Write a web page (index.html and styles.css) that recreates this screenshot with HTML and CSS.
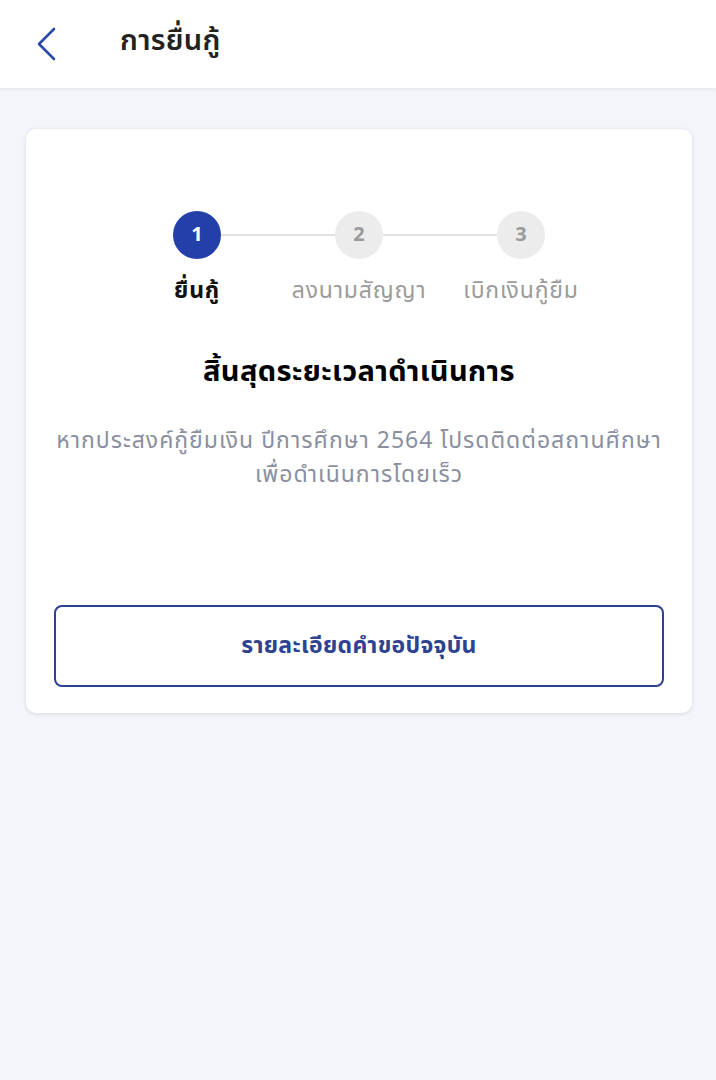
FILE: index.html
```html
<!DOCTYPE html>
<html lang="th">

<head>
  <meta charset="UTF-8" />
  <meta name="viewport" content="width=device-width, initial-scale=1.0" />
  <title>การยื่นกู้</title>
  <link rel="stylesheet" href="styles.css">
</head>

<body>
  <header class="topbar">
    <button class="back" aria-label="ย้อนกลับ">
      <svg width="22" height="34" viewBox="0 0 22 34">
        <polyline points="18,2 3,17 18,32" fill="none" stroke="#2b4aa3" stroke-width="2.6" stroke-linecap="round" stroke-linejoin="round" />
      </svg>
    </button>
    <h1 class="title">การยื่นกู้</h1>
  </header>

  <main class="content">
    <section class="card">
      <div class="stepper">
        <div class="dots">
          <span class="dot active">1</span>
          <span class="line"></span>
          <span class="dot">2</span>
          <span class="line"></span>
          <span class="dot">3</span>
        </div>
        <div class="labels">
          <span class="label active">ยื่นกู้</span>
          <span class="label">ลงนามสัญญา</span>
          <span class="label">เบิกเงินกู้ยืม</span>
        </div>
      </div>

      <h2 class="heading">สิ้นสุดระยะเวลาดำเนินการ</h2>
      <p class="desc">หากประสงค์กู้ยืมเงิน ปีการศึกษา 2564 โปรดติดต่อสถานศึกษา<br>เพื่อดำเนินการโดยเร็ว</p>

      <button class="btn-outline">รายละเอียดคำขอปัจจุบัน</button>
    </section>
  </main>
</body>

</html>
```

FILE: styles.css
```css
body {
  font-family: 'Noto Sans Thai', 'Noto Sans', 'DejaVu Sans', sans-serif;
  background-color: #f4f5fa;
  color: #1e1e1e;
  margin: 0;
  width: 716px;
  min-height: 1080px;
}

.topbar {
  height: 88px;
  background-color: #ffffff;
  display: flex;
  align-items: center;
  box-shadow: 0 1px 4px rgba(0, 0, 0, 0.08);
}

.back {
  background: none;
  border: 0;
  padding: 0;
  margin-left: 36px;
  width: 22px;
  height: 34px;
  display: flex;
  align-items: center;
}

.title {
  margin: 0 0 6px 62px;
  font-size: 29px;
  font-weight: 600;
  color: #222222;
  letter-spacing: 0.3px;
}

.content {
  padding: 41px 24px 0 26px;
}

.card {
  background-color: #ffffff;
  border-radius: 10px;
  box-shadow: 0 1px 4px rgba(0, 0, 0, 0.12);
  padding: 82px 28px 26px;
  display: flex;
  flex-direction: column;
  align-items: center;
}

.stepper {
  display: flex;
  flex-direction: column;
  align-items: center;
}

.dots {
  display: flex;
  align-items: center;
}

.dot {
  width: 48px;
  height: 48px;
  border-radius: 50%;
  background-color: #ececec;
  color: #9a9a9a;
  font-size: 20px;
  font-weight: 700;
  display: flex;
  align-items: center;
  justify-content: center;
}

.dot.active {
  background-color: #2340a8;
  color: #ffffff;
}

.line {
  width: 114px;
  height: 2px;
  background-color: #e2e2e2;
}

.labels {
  display: grid;
  grid-template-columns: repeat(3, 162px);
  margin-top: 16px;
}

.label {
  text-align: center;
  font-size: 23px;
  line-height: 32px;
  letter-spacing: 0.8px;
  color: #9b9b9b;
  white-space: nowrap;
}

.label.active {
  color: #111111;
  font-weight: 700;
}

.heading {
  margin: 45px 0 0;
  font-size: 29px;
  line-height: 40px;
  font-weight: 700;
  color: #000000;
  letter-spacing: 0.4px;
}

.desc {
  margin: 32px 0 0;
  text-align: center;
  font-size: 23px;
  line-height: 34px;
  letter-spacing: 1px;
  color: #8a8fa0;
  white-space: nowrap;
}

.btn-outline {
  margin-top: 113px;
  width: 100%;
  height: 82px;
  background-color: #ffffff;
  border: 2px solid #2d4391;
  border-radius: 8px;
  font-family: inherit;
  font-size: 23px;
  font-weight: 700;
  letter-spacing: 0.3px;
  color: #2d4391;
}
```
